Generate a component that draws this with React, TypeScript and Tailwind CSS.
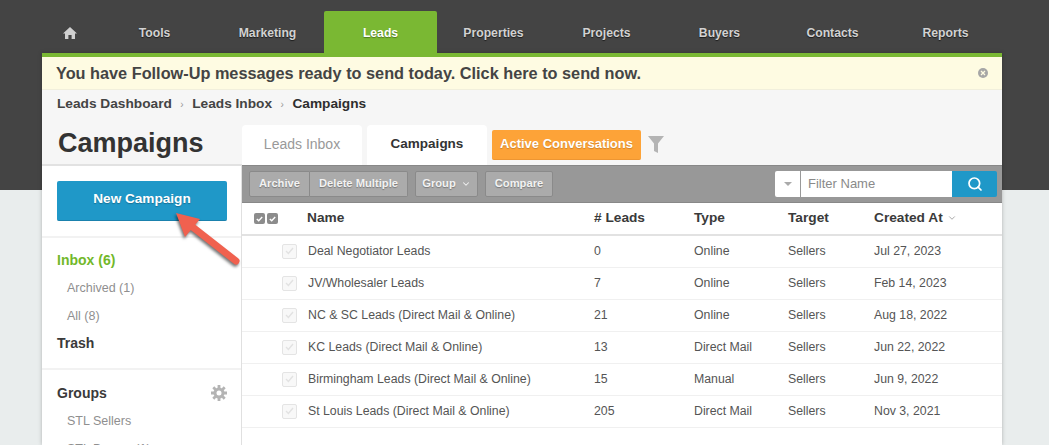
import React from "react";
import { ChevronDown, Search } from "lucide-react";

const navItems = ["Tools", "Marketing", "Leads", "Properties", "Projects", "Buyers", "Contacts", "Reports"];

const rows = [
  { name: "Deal Negotiator Leads", leads: "0", type: "Online", target: "Sellers", created: "Jul 27, 2023" },
  { name: "JV/Wholesaler Leads", leads: "7", type: "Online", target: "Sellers", created: "Feb 14, 2023" },
  { name: "NC & SC Leads (Direct Mail & Online)", leads: "21", type: "Online", target: "Sellers", created: "Aug 18, 2022" },
  { name: "KC Leads (Direct Mail & Online)", leads: "13", type: "Direct Mail", target: "Sellers", created: "Jun 22, 2022" },
  { name: "Birmingham Leads (Direct Mail & Online)", leads: "15", type: "Manual", target: "Sellers", created: "Jun 9, 2022" },
  { name: "St Louis Leads (Direct Mail & Online)", leads: "205", type: "Direct Mail", target: "Sellers", created: "Nov 3, 2021" },
];

const HomeIcon = () => (
  <svg width="14" height="14" viewBox="0 0 14 14" fill="#d0d0d0">
    <path d="M7 1 L14 7.4 L12 7.4 L12 13 L8.6 13 L8.6 9 L5.4 9 L5.4 13 L2 13 L2 7.4 L0 7.4 Z" />
  </svg>
);

const GearIcon = () => (
  <svg width="16" height="16" viewBox="0 0 16 16">
    <circle cx="8" cy="8" r="4" fill="none" stroke="#b4b4b4" strokeWidth="3" />
    <path
      d="M8 0v3M8 13v3M0 8h3M13 8h3M2.3 2.3l2.1 2.1M11.6 11.6l2.1 2.1M2.3 13.7l2.1-2.1M11.6 4.4l2.1-2.1"
      stroke="#b4b4b4"
      strokeWidth="2.8"
    />
  </svg>
);

const HeaderCheck = () => (
  <span className="flex h-[11px] w-[11px] items-center justify-center rounded-[2px] bg-[#8c8c8c]">
    <svg width="7" height="6" viewBox="0 0 7 6" fill="none" stroke="#fff" strokeWidth="1.4">
      <path d="M0.8 3 L2.7 4.8 L6.2 1" />
    </svg>
  </span>
);

const RowCheck = () => (
  <span className="flex h-[15px] w-[15px] items-center justify-center rounded-[2px] border border-[#e4e4e4] bg-[#f8f8f8]">
    <svg width="9" height="8" viewBox="0 0 9 8" fill="none" stroke="#e2e2e2" strokeWidth="1.4">
      <path d="M1 4 L3.4 6.4 L8 1" />
    </svg>
  </span>
);

const toolButton =
  "flex h-[26px] items-center justify-center border border-[#8a8a8a] bg-[#ababab] pb-[1px] text-[11.2px] font-bold text-[#f2f2f2] [text-shadow:0_1px_1px_rgba(0,0,0,0.3)]";

export default function App() {
  return (
    <div className="relative h-[445px] w-[1049px] overflow-hidden bg-[linear-gradient(#444444_190px,#e9eded_190px)] pl-[42px] pt-[11px] font-['Liberation_Sans',Arial,sans-serif]">
      <div className="w-[960px]">
        {/* Top nav */}
        <div className="flex h-[42px]">
          <div className="flex w-[56px] items-center justify-center pt-[2px]">
            <HomeIcon />
          </div>
          {navItems.map((item) => (
            <div
              key={item}
              className={`flex w-[113px] items-center justify-center pt-[3px] text-[12.2px] font-bold ${
                item === "Leads"
                  ? "rounded-t-[2px] bg-[#7ab833] text-white [text-shadow:0_1px_1px_rgba(0,0,0,0.35)]"
                  : "text-[#d2d2d2] [text-shadow:0_1px_1px_rgba(0,0,0,0.6)]"
              }`}
            >
              {item}
            </div>
          ))}
        </div>

        <div className="shadow-[0_0_4px_rgba(0,0,0,0.25)]">
          <div className="h-[4px] bg-[#7ab833]" />

          {/* Notice */}
          <div className="flex h-[33px] items-center justify-between border-b border-[#f1efdc] bg-[#fefbe2] pl-[14px] pr-[14px] text-[16.3px] font-bold text-[#444444]">
            <span>You have Follow-Up messages ready to send today. Click here to send now.</span>
            <span className="flex h-[10px] w-[10px] items-center justify-center rounded-full bg-[#a6a6a6]">
              <svg width="6" height="6" viewBox="0 0 6 6" stroke="#fefbe2" strokeWidth="1.3">
                <path d="M1 1 L5 5 M5 1 L1 5" />
              </svg>
            </span>
          </div>

          {/* Breadcrumb + title */}
          <div className="bg-[#f6f6f6]">
            <div className="flex h-[28px] items-center pl-[15px] pt-[1px] text-[13.7px] font-bold text-[#444444]">
              <span>Leads Dashboard</span>
              <span className="mx-[8.5px] text-[10px] font-normal text-[#999999]">›</span>
              <span>Leads Inbox</span>
              <span className="mx-[8.5px] text-[10px] font-normal text-[#999999]">›</span>
              <span className="text-[#2e2e2e]">Campaigns</span>
            </div>
            <div className="flex h-[47px] items-end">
              <div className="h-full w-[200px] border-b border-[#e2e2e2] pl-[16px] pt-[7px] text-[27px] font-bold leading-[36px] text-[#333333]">
                Campaigns
              </div>
              <div className="flex h-[40px] items-start gap-[5px]">
                <div className="flex h-[40px] w-[120px] items-center justify-center rounded-t-[4px] bg-white pb-[2px] text-[14px] text-[#999999]">
                  Leads Inbox
                </div>
                <div className="flex h-[40px] w-[120px] items-center justify-center rounded-t-[4px] bg-white pb-[2px] text-[13.5px] font-bold text-[#333333]">
                  Campaigns
                </div>
                <div className="mt-[5px] flex h-[30px] w-[149px] items-center justify-center rounded-[2px] border-b border-[#ee9632] bg-[#fda338] pb-[2px] text-[13px] font-bold text-white [text-shadow:0_1px_1px_rgba(0,0,0,0.2)]">
                  Active Conversations
                </div>
                <svg className="ml-[2px] mt-[11px]" width="16" height="17" viewBox="0 0 16 17" fill="#b4b4b4">
                  <path d="M0 0 H16 L10 7.5 V17 L6 15 V7.5 Z" />
                </svg>
              </div>
            </div>
          </div>

          <div className="flex h-[280px] bg-white">
            {/* Sidebar */}
            <aside className="w-[200px] shrink-0 overflow-hidden border-r border-t border-r-[#e0e0e0] border-t-[#e2e2e2]">
              <div className="border-b-2 border-[#f2f2f2] py-[15px] pl-[15px] pr-[14px]">
                <div className="flex h-[40px] items-center justify-center rounded-[2px] border-b border-[#1a81ad] bg-[#1f98c8] pb-[2px] text-[13.6px] font-bold text-white [text-shadow:0_1px_1px_rgba(0,0,0,0.25)]">
                  New Campaign
                </div>
              </div>
              <div className="border-b-2 border-[#f2f2f2] pb-[11px] pl-[15px] pt-[8px]">
                <div className="flex h-[28px] items-center text-[14px] font-bold text-[#72b82a]">Inbox (6)</div>
                <div className="flex h-[28px] items-center pl-[10px] pt-[1px] text-[12.5px] text-[#8f8f8f]">Archived (1)</div>
                <div className="flex h-[28px] items-center pl-[10px] pt-[1px] text-[12.5px] text-[#8f8f8f]">All (8)</div>
                <div className="flex h-[27px] items-center text-[14px] font-bold text-[#3a3a3a]">Trash</div>
              </div>
              <div className="pl-[15px] pr-[14px] pt-[9px]">
                <div className="flex h-[28px] items-center justify-between text-[14px] font-bold text-[#3a3a3a]">
                  Groups
                  <GearIcon />
                </div>
                <div className="flex h-[28px] items-center pl-[10px] pt-[1px] text-[12.5px] text-[#8f8f8f]">STL Sellers</div>
                <div className="flex h-[28px] items-center pl-[10px] pt-[1px] text-[12.5px] text-[#8f8f8f]">STL Buyers (1)</div>
              </div>
            </aside>
            <div className="flex-1">
              {/* Toolbar */}
              <div className="flex h-[38px] items-center justify-between border-y border-[#888888] bg-[#989898] pl-[7px] pr-[5px]">
                <div className="flex items-center gap-[7px]">
                  <div className="flex">
                    <div className={`${toolButton} w-[61px] rounded-l-[2px]`}>Archive</div>
                    <div className={`${toolButton} w-[98px] rounded-r-[2px] border-l-0`}>Delete Multiple</div>
                  </div>
                  <div className={`${toolButton} w-[63px] gap-[5px] rounded-[2px]`}>
                    Group <ChevronDown size={10} strokeWidth={2.5} />
                  </div>
                  <div className={`${toolButton} w-[68px] rounded-[2px]`}>Compare</div>
                </div>
                <div className="flex h-[26px] overflow-hidden rounded-[2px]">
                  <div className="flex w-[26px] items-center justify-center border-r border-[#999999] bg-white">
                    <span className="h-0 w-0 border-x-[4px] border-t-[4px] border-x-transparent border-t-[#aaaaaa]" />
                  </div>
                  <div className="flex w-[151px] items-center bg-white pb-[1px] pl-[7px] text-[13px] text-[#8a8a8a]">Filter Name</div>
                  <div className="flex w-[45px] items-center justify-center bg-[#1f98c8]">
                    <Search size={16} color="#fff" strokeWidth={2.6} />
                  </div>
                </div>
              </div>

              {/* Table */}
              <div className="grid grid-cols-[65px_287px_100px_94px_86px_128px] items-center">
                <div className="col-span-6 grid h-[33px] grid-cols-subgrid items-center border-b-2 border-[#e2e2e2] text-[13.7px] font-bold text-[#3a3a3a]">
                  <div className="flex gap-[2px] pl-[12px]">
                    <HeaderCheck />
                    <HeaderCheck />
                  </div>
                  <div>Name</div>
                  <div># Leads</div>
                  <div>Type</div>
                  <div>Target</div>
                  <div className="flex items-center gap-[4px]">
                    Created At <ChevronDown size={10} strokeWidth={2} color="#999999" />
                  </div>
                </div>
                {rows.map((row) => (
                  <div
                    key={row.name}
                    className="col-span-6 grid h-[32px] grid-cols-subgrid items-center border-b border-[#f0f0f0] pb-[1px] text-[12.3px] text-[#555555]"
                  >
                    <div className="pl-[40px]">
                      <RowCheck />
                    </div>
                    <div className="pl-[1px]">{row.name}</div>
                    <div>{row.leads}</div>
                    <div>{row.type}</div>
                    <div>{row.target}</div>
                    <div>{row.created}</div>
                  </div>
                ))}
              </div>
            </div>
          </div>
        </div>
      </div>

      {/* Arrow annotation over the page */}
      <svg className="absolute left-[170px] top-[205px]" width="80" height="70" viewBox="0 0 80 70">
        <g style={{ filter: "drop-shadow(-1px 2px 1.5px rgba(0,0,0,0.55))" }}>
          <path d="M66 56 L20 20" stroke="#f0614f" strokeWidth="7" strokeLinecap="round" />
          <path d="M6 8 L30 14 L15 32 Z" fill="#f0614f" />
        </g>
      </svg>
    </div>
  );
}
